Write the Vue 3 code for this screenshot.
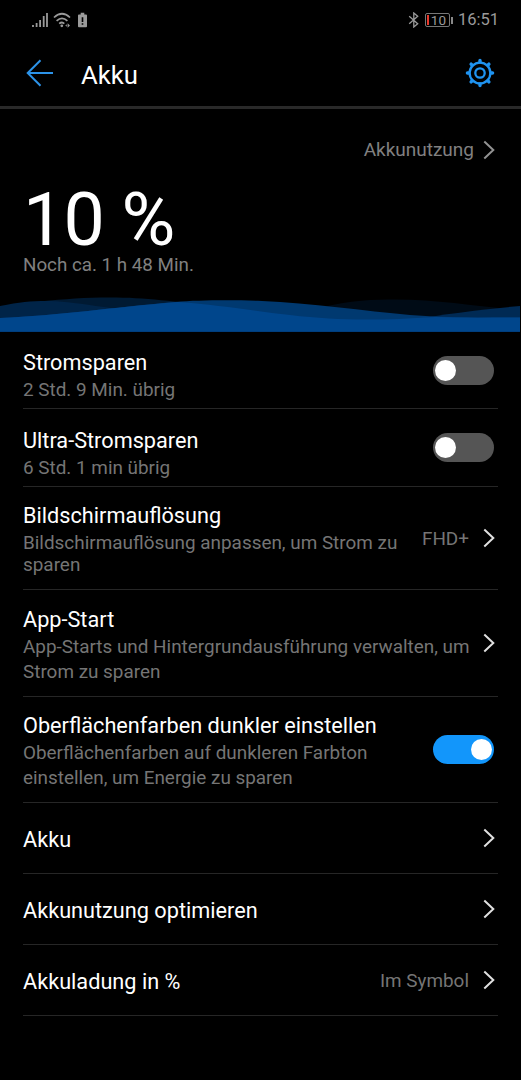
<script setup>
import { ref } from 'vue'

const items = ref([
  { title: 'Stromsparen', text: '2 Std. 9 Min. übrig', toggle: true, on: false, size: 'double' },
  { title: 'Ultra-Stromsparen', text: '6 Std. 1 min übrig', toggle: true, on: false, size: 'double-next' },
  {
    title: 'Bildschirmauflösung',
    text: 'Bildschirmauflösung anpassen, um Strom zu sparen',
    value: 'FHD+',
    size: 'triple-tight',
  },
  {
    title: 'App-Start',
    text: 'App-Starts und Hintergrundausführung verwalten, um Strom zu sparen',
    size: 'triple',
  },
  {
    title: 'Oberflächenfarben dunkler einstellen',
    text: 'Oberflächenfarben auf dunkleren Farbton einstellen, um Energie zu sparen',
    toggle: true,
    on: true,
    size: 'triple-toggle',
  },
  { title: 'Akku', size: 'single' },
  { title: 'Akkunutzung optimieren', size: 'single' },
  { title: 'Akkuladung in %', value: 'Im Symbol', size: 'single' },
])
</script>

<template>
  <div class="screen">
    <div class="status">
      <div class="status__group">
        <svg class="status__signal" viewBox="0 0 16 16">
          <path d="M1 13v2M4.6 11v4M8.1 8v7M11.7 4v11M15 1v14" />
        </svg>
        <svg class="status__wifi" viewBox="0 0 18 16">
          <path d="M1 5.500Q9 -2 17 5.500M3.600 8.800Q9 3.800 14.400 8.800M6.200 11.700Q9 9.300 11.300 11.700" />
          <circle cx="8.8" cy="13.8" r="1.4" />
          <path class="status__fill" d="M14.600 11.300 17 13.500l-2.400 2.200zM13.800 12.200v2.600l-1.500-1.300z" />
        </svg>
        <svg class="status__alert" viewBox="0 0 10 16">
          <path d="M3 0h4v2h2q1 0 1 1v12q0 1-1 1H1q-1 0-1-1V3q0-1 1-1h2z" />
          <path class="status__mark" d="M5 5v5.2M5 11.600v1.800" />
        </svg>
      </div>
      <div class="status__group">
        <svg class="status__bluetooth" viewBox="0 0 12 16">
          <path d="m1.200 4.200 8.500 7.500L5.800 15V1l3.900 3.300-8.500 7.500" />
        </svg>
        <div class="battery">
          <span class="battery__level"></span>
          <span class="battery__text">10</span>
        </div>
        <span class="battery__tip"></span>
        <span class="status__time">16:51</span>
      </div>
    </div>

    <header class="bar">
      <svg class="bar__back" viewBox="0 0 28 28">
        <path d="M27 14H2M14.500 1.200 1.700 14l12.800 12.800" />
      </svg>
      <h1>Akku</h1>
      <svg class="bar__gear" viewBox="0 0 30 30">
        <circle cx="15" cy="15" r="10.4" />
        <circle cx="15" cy="15" r="4.7" />
        <path
          d="M15 4V2.400M15 26v1.600M4 15H2.400M26 15h1.600M7.200 7.200 6.100 6.100M22.800 7.200l1.100-1.100M7.200 22.800l-1.100 1.100M22.800 22.800l1.100 1.100"
        />
      </svg>
    </header>

    <section class="summary">
      <div class="summary__link">
        <span>Akkunutzung</span>
        <svg class="chevron chevron--dim" viewBox="0 0 12 20"><path d="m1.300 1.500 9 8.500-9 8.500" /></svg>
      </div>
      <div class="summary__percent">10 %</div>
      <div class="summary__time">Noch ca. 1 h 48 Min.</div>
      <svg class="wave" viewBox="0 0 520 37">
        <path fill="#000b16" d="M320 13C350 5 375 4.500 395 4.500 440 4.500 480 12 520 15V36H320z" />
        <path fill="#001a33" d="M40 6.500C65 4 85 2.500 110 2.500 145 2.500 175 6 220 13V36H40z" />
        <path fill="#002448" d="M0 11C20 7 30 6 47 6 70 6 110 13 180 24L0 32z" />
        <path fill="#002a54" d="M410 25C445 19 485 14 520 11V36H410z" />
        <path
          fill="#003970"
          d="M0 23C60 20.500 110 12.500 175 7 200 5 235 5 262 6 310 8 365 16 410 20 445 23 480 22.500 520 22.500V36.700H0z"
        />
        <path
          fill="#00468c"
          d="M0 23C60 20.500 110 12.500 178 7 220 10 255 16 290 20 340 26 380 25.500 435 22 465 23 490 22.500 520 22.500V36.700H0z"
        />
      </svg>
    </section>

    <main class="list">
      <div v-for="item in items" :key="item.title" class="row" :class="`row--${item.size}`">
        <div class="row__body">
          <div class="row__title">{{ item.title }}</div>
          <div v-if="item.text" class="row__text">{{ item.text }}</div>
        </div>
        <span v-if="item.value" class="row__value">{{ item.value }}</span>
        <button
          v-if="item.toggle"
          class="switch"
          :class="{ 'switch--on': item.on }"
          type="button"
          role="switch"
          :aria-checked="item.on"
          :aria-label="item.title"
          @click="item.on = !item.on"
        >
          <span class="switch__knob"></span>
        </button>
        <svg v-else class="chevron" viewBox="0 0 12 20"><path d="m1.300 1.500 9 8.500-9 8.500" /></svg>
      </div>
    </main>
  </div>
</template>

<style>
body {
  margin: 0;
  background: #000;
}
</style>

<style scoped>
.screen {
  box-sizing: border-box;
  width: 521px;
  height: 1080px;
  overflow: hidden;
  color: #fff;
  background: #000;
  font-family: Roboto, 'Liberation Sans', sans-serif;
}

svg {
  display: block;
  flex: none;
  fill: none;
}

.status {
  display: flex;
  align-items: center;
  justify-content: space-between;
  height: 40px;
  padding: 0 22px 0 32px;
  color: #9a9a9a;
}

.status__group {
  display: flex;
  align-items: center;
}

.status__group svg {
  height: 16px;
  stroke: currentColor;
}

.status__signal {
  width: 16px;
  stroke-width: 1.8;
}

.status__wifi {
  width: 18px;
  margin-left: 5px;
  stroke-width: 1.7;
}

.status__wifi circle,
.status__wifi .status__fill {
  fill: currentColor;
  stroke: none;
}

.status__alert {
  width: 9px;
  margin-left: 7px;
}

.status__alert path {
  fill: currentColor;
  stroke: none;
}

.status__alert .status__mark {
  stroke: #000;
  stroke-width: 1.8;
}

.status__bluetooth {
  width: 12px;
  margin-right: 5px;
  stroke-width: 1.3;
}

.battery {
  display: flex;
  align-items: center;
  box-sizing: border-box;
  width: 25px;
  height: 14px;
  padding: 1px;
  border: 1px solid #777;
  border-radius: 2px;
}

.battery__level {
  width: 2px;
  height: 10px;
  background: #e8392c;
}

.battery__text {
  flex: 1;
  font-size: 13.5px;
  line-height: 12px;
  text-align: center;
}

.battery__tip {
  width: 2px;
  height: 7px;
  margin-left: 1px;
  background: #888;
}

.status__time {
  margin-left: 5px;
  font-size: 16.5px;
  line-height: 20px;
}

.bar {
  display: flex;
  align-items: center;
  box-sizing: border-box;
  height: 69px;
  padding: 0 26px 0 26px;
  border-bottom: 3px solid #292929;
}

.bar__back {
  width: 28px;
  height: 28px;
  stroke: #2c93e8;
  stroke-width: 2;
}

.bar h1 {
  flex: 1;
  margin: 4px 0 0 27px;
  font-size: 25.7px;
  font-weight: 400;
  line-height: 32px;
}

.bar__gear {
  width: 30px;
  height: 30px;
  stroke: #1f93f0;
  stroke-width: 2.3;
  stroke-linecap: round;
}

.bar__gear path {
  stroke-width: 3.4;
}

.summary {
  display: flex;
  flex-direction: column;
  height: 223px;
}

.summary__link {
  display: flex;
  align-items: center;
  justify-content: flex-end;
  gap: 9px;
  padding: 28px 26px 0 0;
  color: #808080;
  font-size: 19px;
  line-height: 25px;
}

.summary__percent {
  margin-top: 25px;
  padding-left: 23px;
  font-size: 73.5px;
  letter-spacing: -0.8px;
  line-height: 66px;
}

.summary__time {
  padding-left: 23px;
  color: #808080;
  font-size: 18.8px;
  line-height: 24px;
}

.wave {
  width: 520px;
  height: 37px;
  margin-top: auto;
}

.chevron {
  width: 12px;
  height: 20px;
  stroke: #e0e0e0;
  stroke-width: 2;
}

.chevron--dim {
  stroke: #929292;
}

.row {
  display: flex;
  align-items: center;
  box-sizing: border-box;
  margin: 0 23px;
  padding-right: 3px;
  border-bottom: 1px solid #262626;
}

.row__body {
  flex: 1;
  align-self: flex-start;
}

.row__title {
  font-size: 21.7px;
  line-height: 30px;
}

.row__text {
  color: #757575;
  font-size: 18.9px;
  line-height: 25px;
}

.row__value {
  margin: 0 14px 0 20px;
  color: #757575;
  font-size: 18.9px;
  line-height: 25px;
}

.row--double {
  height: 77px;
}

.row--double .row__body {
  padding-top: 16px;
}

.row--double .row__text {
  margin-top: -1px;
}

.row--double-next {
  height: 78px;
}

.row--double-next .row__body {
  padding-top: 17px;
}

.row--double-next .row__text {
  margin-top: -1px;
}

.row--triple-tight {
  height: 103px;
}

.row--triple-tight .row__body {
  padding-top: 14px;
}

.row--triple-tight .row__text {
  padding-top: 1px;
  line-height: 22px;
}

.row--triple {
  height: 107px;
}

.row--triple .row__body {
  padding-top: 15px;
}

.row--triple .row__text {
  margin-top: -1px;
}

.row--triple-toggle {
  height: 106px;
}

.row--triple-toggle .row__body {
  padding: 14px 50px 0 0;
}

.row--triple-toggle .row__text {
  margin-top: -1px;
}

.row--single {
  height: 71px;
}

.row--single .row__body {
  padding-top: 22px;
}

.switch {
  box-sizing: border-box;
  display: flex;
  flex: none;
  width: 61px;
  height: 29px;
  margin-right: 1px;
  padding: 4px 2px;
  border: 0;
  border-radius: 15px;
  background: #555;
}

.switch--on {
  justify-content: flex-end;
  background: #1296fb;
}

.switch__knob {
  width: 21px;
  height: 21px;
  border-radius: 50%;
  background: #fff;
}
</style>
